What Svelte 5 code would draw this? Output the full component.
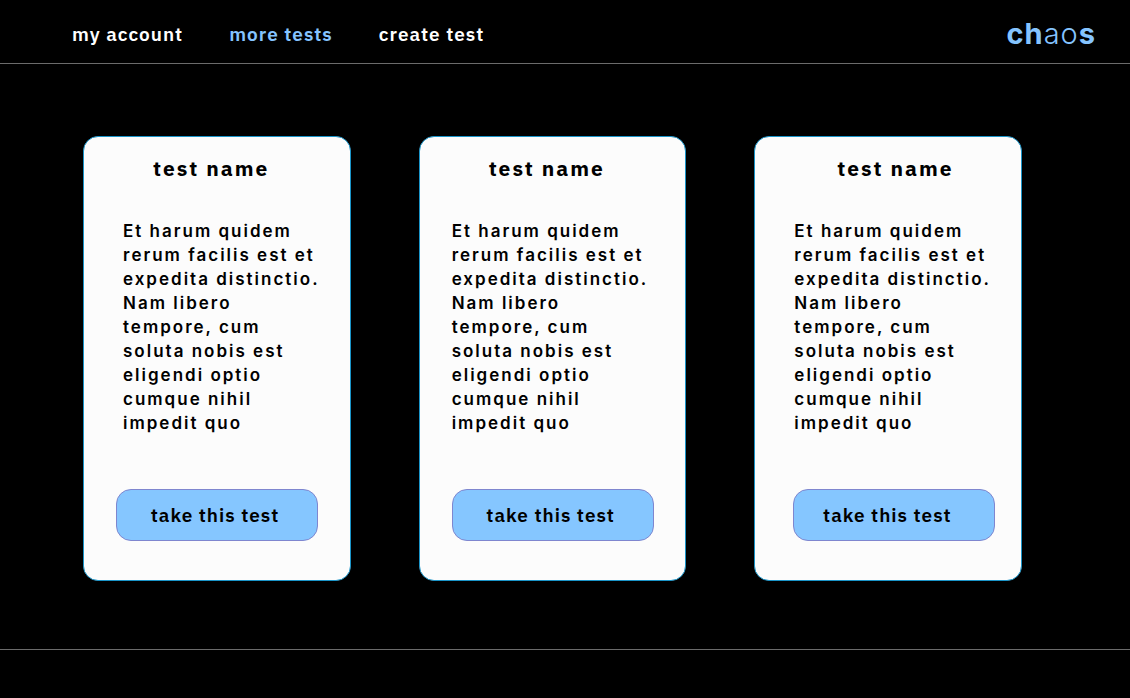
<script>
  const links = [
    { label: 'my account', current: false },
    { label: 'more tests', current: true },
    { label: 'create test', current: false },
  ];

  const text =
    'Et harum quidem rerum facilis est et expedita distinctio. Nam libero tempore, cum soluta nobis est eligendi optio cumque nihil impedit quo';

  const tests = [
    { name: 'test name', text, place: 'first' },
    { name: 'test name', text, place: 'middle' },
    { name: 'test name', text, place: 'last' },
  ];
</script>

<div class="page">
  <header>
    <nav aria-label="Main">
      {#each links as link}
        <a href="#top" class:current={link.current} aria-current={link.current ? 'page' : undefined}>{link.label}</a>
      {/each}
    </nav>
    <a class="logo" href="#top">ch<span>ao</span>s</a>
  </header>

  <main>
    {#each tests as test}
      <article class={test.place}>
        <h2>{test.name}</h2>
        <p>{test.text}</p>
        <button type="button">take this test</button>
      </article>
    {/each}
  </main>

  <footer></footer>
</div>

<style>
  :global(body) {
    margin: 0;
    background: #000;
  }

  .page {
    display: flex;
    flex-direction: column;
    min-height: 100vh;
    background: #000;
    font-family: 'IBM Plex Sans', 'Noto Sans', sans-serif;
  }

  header {
    display: flex;
    align-items: center;
    justify-content: space-between;
    box-sizing: border-box;
    padding: 14px 34px 9px 72px;
    border-bottom: 1px solid #6b6b6b;
  }

  nav {
    display: flex;
    gap: 46px;
  }

  nav a {
    color: #fff;
    font-size: 19px;
    font-weight: 600;
    line-height: 24px;
    letter-spacing: 1px;
    text-decoration: none;
  }

  nav a.current {
    color: #85c4ff;
  }

  .logo {
    color: #85c4ff;
    font-family: Inter, sans-serif;
    font-size: 29px;
    font-weight: 700;
    line-height: 40px;
    letter-spacing: 1px;
    text-decoration: none;
  }

  .logo span {
    font-weight: 300;
  }

  main {
    display: grid;
    grid-template-columns: repeat(3, 1fr);
    gap: 68px;
    padding: 72px 108px 68px 83px;
  }

  article {
    --title-start: 69px;
    --text-start: 39px;
    --button-start: 32px;
    --label-shift: 4px;
    display: flex;
    flex-direction: column;
    box-sizing: border-box;
    padding-bottom: 39px;
    border: 1px solid #1a94c8;
    border-radius: 15px;
    background: #fcfcfc;
    color: #000;
  }

  .middle {
    --text-start: 32px;
    --button-start: 32px;
  }

  .last {
    --title-start: 82px;
    --text-start: 39px;
    --button-start: 38px;
    --label-shift: 14px;
  }

  h2 {
    margin: 16px 0 36px;
    padding-left: var(--title-start);
    font-size: 21px;
    font-weight: 700;
    line-height: 30px;
    letter-spacing: 2px;
    white-space: nowrap;
  }

  p {
    width: 198px;
    margin: 0 0 54px;
    padding-left: var(--text-start);
    font-family: Inter, sans-serif;
    font-size: 17px;
    font-weight: 600;
    line-height: 24px;
    letter-spacing: 2px;
  }

  button {
    width: 202px;
    height: 52px;
    margin-left: var(--button-start);
    padding: 0 var(--label-shift) 0 0;
    border: 1px solid #7f86cf;
    border-radius: 15px;
    background: #85c6ff;
    color: #000;
    font: inherit;
    font-size: 19px;
    font-weight: 600;
    letter-spacing: 1px;
    white-space: nowrap;
    cursor: pointer;
  }

  footer {
    flex: 1;
    border-top: 1px solid #6b6b6b;
  }
</style>
